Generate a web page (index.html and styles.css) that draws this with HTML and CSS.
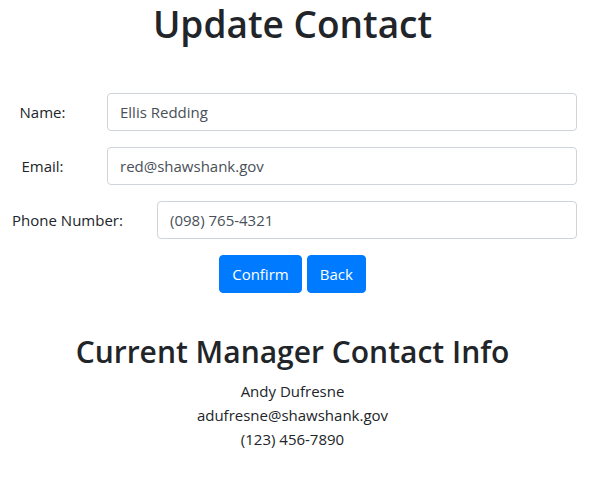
FILE: index.html
```html
<!DOCTYPE html>
<html lang="en">
<head>
<meta charset="utf-8">
<title>Update Contact</title>
<link rel="stylesheet" href="styles.css">
</head>
<body>
<main class="page">
  <h1 class="title">Update Contact</h1>
  <form class="form">
    <div class="field">
      <label class="field-label" for="name">Name:</label>
      <input class="field-input" id="name" type="text" value="Ellis Redding">
    </div>
    <div class="field">
      <label class="field-label" for="email">Email:</label>
      <input class="field-input" id="email" type="text" value="red@shawshank.gov">
    </div>
    <div class="field">
      <label class="field-label field-label--wide" for="phone">Phone Number:</label>
      <input class="field-input" id="phone" type="text" value="(098) 765-4321">
    </div>
    <div class="actions">
      <button class="btn" type="button">Confirm</button>
      <button class="btn" type="button">Back</button>
    </div>
  </form>
  <section class="manager">
    <h2 class="manager-title">Current Manager Contact Info</h2>
    <p class="manager-line">Andy Dufresne</p>
    <p class="manager-line">adufresne@shawshank.gov</p>
    <p class="manager-line">(123) 456-7890</p>
  </section>
</main>
</body>
</html>
```
FILE: styles.css
```css
* { box-sizing: border-box; }

body {
  margin: 0;
  font-family: "Open Sans", "Noto Sans", sans-serif;
  font-size: 15px;
  line-height: 24px;
  color: #212529;
  background: #fff;
}

.page {
  width: 585px;
  text-align: center;
}

.title {
  margin: 0;
  font-size: 37px;
  font-weight: 600;
  line-height: 48px;
}

.form {
  margin-top: 45px;
}

.field {
  display: flex;
  align-items: center;
  margin-bottom: 16px;
  padding-right: 8px;
}

.field-label {
  width: 85px;
  flex: none;
  margin-right: 22px;
  text-align: center;
  white-space: nowrap;
}

.field-label--wide {
  width: 135px;
}

.field-input {
  flex: 1;
  min-width: 0;
  height: 38px;
  padding: 6px 12px;
  border: 1px solid #ced4da;
  border-radius: 4px;
  font-family: inherit;
  font-size: 15px;
  color: #495057;
  background: #fff;
}

.actions {
  display: flex;
  justify-content: center;
  gap: 5px;
}

.btn {
  height: 38px;
  padding: 6px 12px;
  border: 1px solid #007bff;
  border-radius: 4px;
  background: #007bff;
  color: #fff;
  font-family: inherit;
  font-size: 15px;
  line-height: 24px;
}

.manager {
  margin-top: 40px;
}

.manager-title {
  margin: 0 0 8px;
  font-size: 30px;
  font-weight: 600;
  line-height: 38px;
}

.manager-line {
  margin: 0;
  line-height: 24px;
}
```
